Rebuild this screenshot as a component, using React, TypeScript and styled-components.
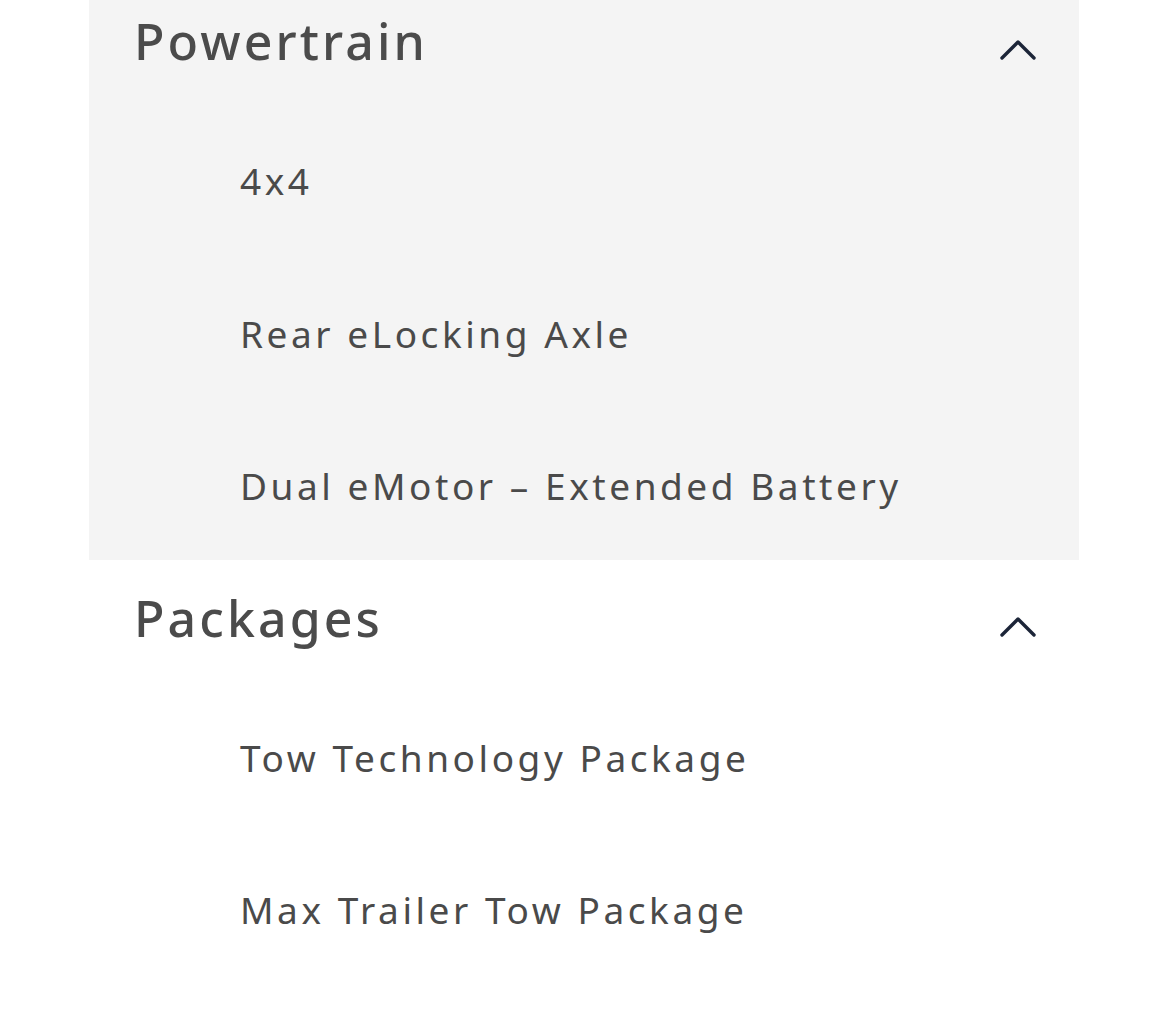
import React from "react";
import styled, { createGlobalStyle } from "styled-components";

const Global = createGlobalStyle`
  html, body { margin: 0; padding: 0; background: #ffffff; }
  body { font-family: "Noto Sans", "Open Sans", sans-serif; -webkit-font-smoothing: antialiased; }
`;

const Page = styled.div`
  width: 1169px;
  height: 1013px;
  overflow: hidden;
  display: flex;
  flex-direction: column;
  align-items: flex-start;
`;

const Accordion = styled.div`
  margin: -17px 0 0 89px;
  width: 990px;
  display: flex;
  flex-direction: column;
`;

const Section = styled.section<{ $shaded?: boolean }>`
  background: ${(p) => (p.$shaded ? "#f4f4f4" : "transparent")};
  display: flex;
  flex-direction: column;
`;

const Header = styled.div`
  height: 116px;
  display: flex;
  align-items: center;
  justify-content: space-between;
  padding: 0 42px 0 45px;
`;

const Title = styled.h2`
  margin: 0;
  font-size: 50px;
  font-weight: 500;
  letter-spacing: 3.1px;
  color: #4b4b4b;
  line-height: 1;
`;

const ChevronBox = styled.span`
  display: flex;
  margin-top: 18px;
`;

const List = styled.ul`
  list-style: none;
  margin: 0;
  padding: 5px 0 0 151px;
  display: flex;
  flex-direction: column;
`;

const Item = styled.li`
  height: 153px;
  display: flex;
  align-items: center;
  font-size: 37px;
  letter-spacing: 3.55px;
  color: #4a4a4a;
  &:last-child { height: 150px; }
`;

const Chevron = () => (
  <ChevronBox>
    <svg width="38" height="22" viewBox="0 0 38 22" fill="none">
      <path d="M3 19 L19 3 L35 19" stroke="#1c2538" strokeWidth="3.4" strokeLinecap="round" strokeLinejoin="round" />
    </svg>
  </ChevronBox>
);

const data = [
  { title: "Powertrain", shaded: true, items: ["4x4", "Rear eLocking Axle", "Dual eMotor \u2013 Extended Battery"] },
  { title: "Packages", shaded: false, items: ["Tow Technology Package", "Max Trailer Tow Package"] },
];

export default function App() {
  return (
    <>
      <Global />
      <Page>
        <Accordion>
          {data.map((s) => (
            <Section key={s.title} $shaded={s.shaded}>
              <Header>
                <Title>{s.title}</Title>
                <Chevron />
              </Header>
              <List>
                {s.items.map((i) => (
                  <Item key={i}>{i}</Item>
                ))}
              </List>
            </Section>
          ))}
        </Accordion>
      </Page>
    </>
  );
}
